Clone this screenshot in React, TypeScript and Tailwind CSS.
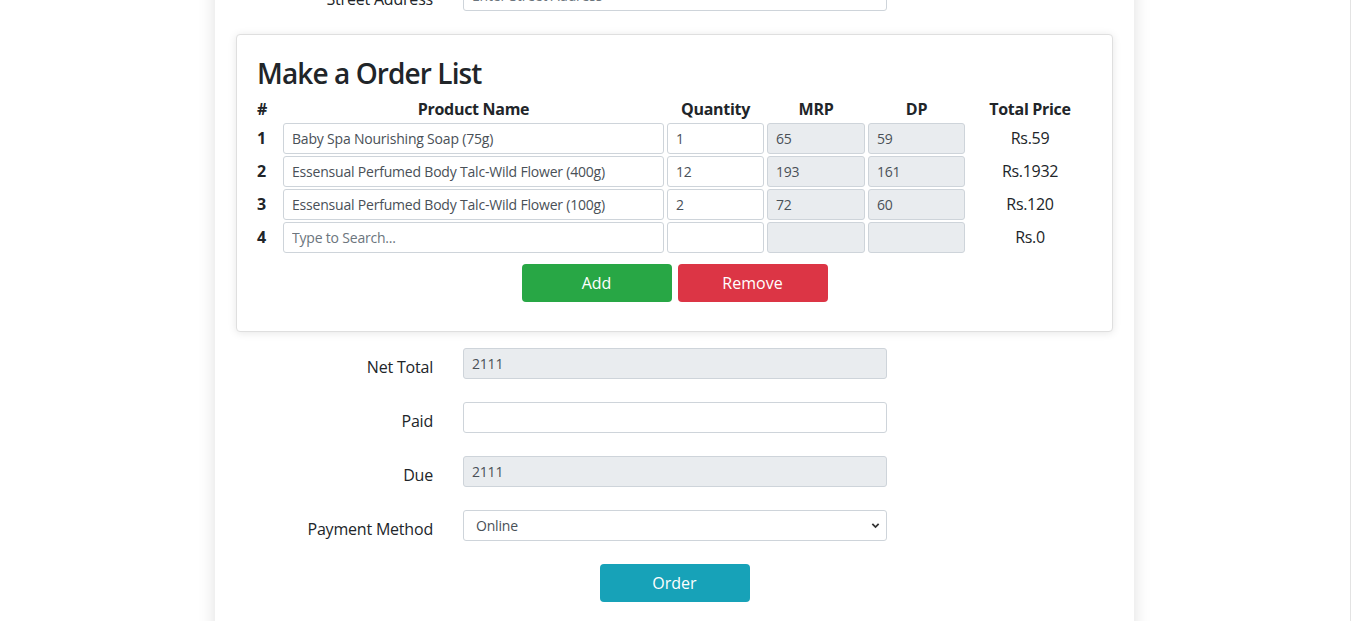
const rows = [
  { n: 1, name: "Baby Spa Nourishing Soap (75g)", qty: "1", mrp: "65", dp: "59", total: "Rs.59" },
  { n: 2, name: "Essensual Perfumed Body Talc-Wild Flower (400g)", qty: "12", mrp: "193", dp: "161", total: "Rs.1932" },
  { n: 3, name: "Essensual Perfumed Body Talc-Wild Flower (100g)", qty: "2", mrp: "72", dp: "60", total: "Rs.120" },
  { n: 4, name: "", qty: "", mrp: "", dp: "", total: "Rs.0" },
];

const field =
  "h-[31px] w-full rounded-[3px] border border-[#ced4da] px-2 text-[14px] leading-[21px] tracking-[-0.2px] text-[#495057] outline-none placeholder:text-[#6c757d]";

function FormRow({ label, children }: { label: string; children: React.ReactNode }) {
  return (
    <div className="mb-4 flex">
      <label className="w-[212px] shrink-0 pr-[15px] py-[7px] text-right text-[16px] leading-[24px] tracking-[-0.2px] text-[#212529]">
        {label}
      </label>
      <div className="w-[454px] px-[15px]">{children}</div>
    </div>
  );
}

export default function App() {
  return (
    <div className="h-screen w-[1351px] overflow-hidden border-r border-[#e3e3e3] bg-white font-['Open_Sans',sans-serif]">
      <div className="ml-[215px] min-h-[660px] w-[919px] bg-white px-[21px] shadow-[0_0_16px_rgba(0,0,0,0.13)]">
        <div className="-mt-[20px]">
          <FormRow label="Street Address">
            <input className={field} placeholder="Enter Street Address" />
          </FormRow>
        </div>

        <div className="mb-4 rounded-[4px] border border-[#dfdfdf] bg-white px-5 pb-[29px] pt-5 shadow-[0_1px_8px_rgba(0,0,0,0.1)]">
          <h3 className="mb-[6px] mt-[2px] text-[28px] font-semibold leading-[1.2] tracking-[-0.9px] text-[#212529]">
            Make a Order List
          </h3>
          <div className="grid grid-cols-[23px_381px_97px_98px_97px_124px] gap-x-[3px] gap-y-[2px] text-[#212529]">
            <div className="text-[16px] font-bold leading-[24px]">#</div>
            <div className="text-center text-[16px] font-bold leading-[24px] tracking-[-0.3px]">Product Name</div>
            <div className="text-center text-[16px] font-bold leading-[24px] tracking-[-0.3px]">Quantity</div>
            <div className="text-center text-[16px] font-bold leading-[24px] tracking-[-0.3px]">MRP</div>
            <div className="text-center text-[16px] font-bold leading-[24px] tracking-[-0.3px]">DP</div>
            <div className="text-center text-[16px] font-bold leading-[24px] tracking-[-0.3px]">Total Price</div>
            {rows.map((r) => (
              <div key={r.n} className="contents">
                <div className="flex items-center text-[16px] font-bold">{r.n}</div>
                <input className={field} defaultValue={r.name} placeholder="Type to Search..." />
                <input className={field} defaultValue={r.qty} />
                <input className={`${field} bg-[#e9ecef]`} defaultValue={r.mrp} disabled />
                <input className={`${field} bg-[#e9ecef]`} defaultValue={r.dp} disabled />
                <div className="flex items-center justify-center text-[16px] tracking-[-0.3px]">{r.total}</div>
              </div>
            ))}
          </div>
          <div className="mt-[11px] flex justify-center gap-[6px]">
            <button className="h-[38px] w-[150px] rounded-[4px] bg-[#28a745] text-[16px] text-white">Add</button>
            <button className="h-[38px] w-[150px] rounded-[4px] bg-[#dc3545] text-[16px] text-white">Remove</button>
          </div>
        </div>

        <FormRow label="Net Total">
          <input className={`${field} bg-[#e9ecef]`} defaultValue="2111" disabled />
        </FormRow>
        <FormRow label="Paid">
          <input className={field} />
        </FormRow>
        <FormRow label="Due">
          <input className={`${field} bg-[#e9ecef]`} defaultValue="2111" disabled />
        </FormRow>
        <FormRow label="Payment Method">
          <div className="relative">
            <select className={`${field} appearance-none bg-white pl-3`} defaultValue="Online">
              <option>Online</option>
              <option>Cash</option>
            </select>
            <svg
              className="pointer-events-none absolute right-[7px] top-[11px]"
              width="9"
              height="9"
              viewBox="0 0 10 10"
              fill="none"
              stroke="#333"
              strokeWidth="2"
            >
              <path d="M1.5 3.2 5 6.7 8.5 3.2" />
            </svg>
          </div>
        </FormRow>
        <div className="flex justify-center">
          <button className="h-[38px] w-[150px] rounded-[4px] bg-[#17a2b8] text-[16px] text-white">Order</button>
        </div>
      </div>
    </div>
  );
}
